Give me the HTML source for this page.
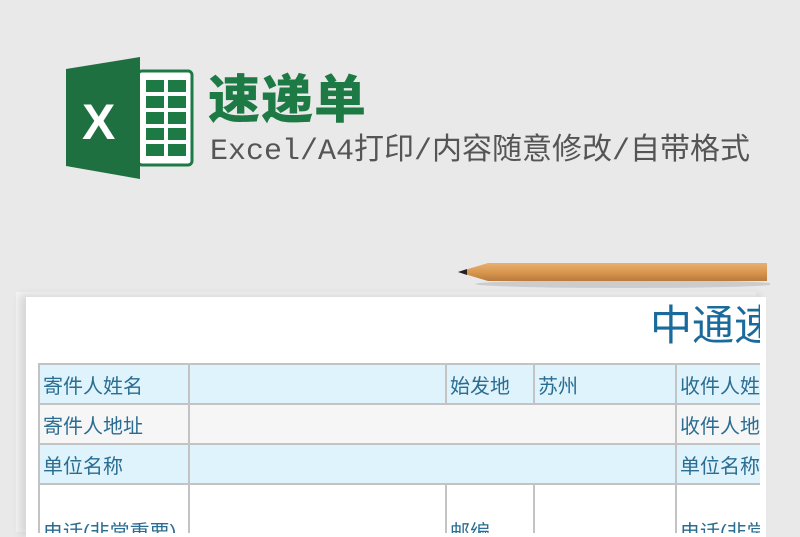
<!DOCTYPE html>
<html><head><meta charset="utf-8"><style>
body{margin:0;width:800px;height:526px;overflow:hidden;background:#e9e9e9;position:relative;font-family:"Liberation Sans","Noto Sans CJK SC",sans-serif}
.abs{position:absolute}
.t1{left:208px;top:70px;font-size:52px;font-weight:900;color:#1e7a45;line-height:62px;letter-spacing:1px}
.t2{left:210px;top:134px;font-size:30px;color:#555;line-height:36px;font-family:"Liberation Mono","Noto Sans CJK SC",monospace}
.paper{left:26px;top:297px;width:740px;height:240px;background:#fff;box-shadow:-6px -2px 8px rgba(0,0,0,.12)}
.paper2{left:16px;top:292px;width:740px;height:240px;background:#f3f3f3}
table{position:absolute;border-collapse:collapse;font-size:20px;color:#2a6d92}
td{border:2px solid #c3c3c3;padding:0 3px;height:38px;vertical-align:middle;white-space:nowrap;overflow:hidden}
.b{background:#def3fb}.g{background:#f6f6f6}
</style></head><body>
<svg class="abs" style="left:60px;top:55px" width="140" height="125" viewBox="0 0 140 125">
<rect x="78" y="16" width="54" height="94" rx="4" fill="#fff" stroke="#1e7a45" stroke-width="3"/>
<g fill="#1e7a45"><rect x="86" y="25" width="18" height="12"/><rect x="108" y="25" width="18" height="12"/>
<rect x="86" y="41" width="18" height="12"/><rect x="108" y="41" width="18" height="12"/>
<rect x="86" y="57" width="18" height="12"/><rect x="108" y="57" width="18" height="12"/>
<rect x="86" y="73" width="18" height="12"/><rect x="108" y="73" width="18" height="12"/>
<rect x="86" y="89" width="18" height="12"/><rect x="108" y="89" width="18" height="12"/></g>
<path d="M6 14 L80 2 L80 124 L6 111 Z" fill="#1e7040"/>
<text x="22" y="84" font-size="50" font-weight="bold" fill="#fff" font-family="Liberation Sans">X</text>
</svg>
<div class="abs t1">速递单</div>
<div class="abs t2">Excel/A4打印/内容随意修改/自带格式</div>
<div class="abs paper2"></div>
<div class="abs paper"></div>
<svg class="abs" style="left:455px;top:260px" width="315" height="30">
<defs><linearGradient id="p" x1="0" y1="0" x2="0" y2="1"><stop offset="0" stop-color="#e8b070"/><stop offset=".5" stop-color="#d9974f"/><stop offset="1" stop-color="#b97a3c"/></linearGradient></defs>
<ellipse cx="170" cy="24" rx="150" ry="4" fill="rgba(0,0,0,.12)"/>
<path d="M3 12 L33 3 L312 3 L312 21 L33 21 Z" fill="url(#p)"/>
<path d="M3 12 L12 9 L12 15 Z" fill="#222"/>
</svg>
<div class="abs" style="left:650px;top:298px;font-size:42px;color:#1a6a9c;line-height:56px;width:110px;overflow:hidden;white-space:nowrap">中通速递</div>
<div class="abs" style="left:38px;top:363px;width:722px;height:170px;overflow:hidden">
<table style="left:0;top:0;table-layout:fixed;width:760px">
<colgroup><col style="width:150px"><col style="width:257px"><col style="width:88px"><col style="width:142px"><col style="width:123px"></colgroup>
<tr><td class="b">寄件人姓名</td><td class="b"></td><td class="b">始发地</td><td class="b">苏州</td><td class="b">收件人姓名</td></tr>
<tr><td class="g">寄件人地址</td><td class="g" colspan="3"></td><td class="g">收件人地址</td></tr>
<tr><td class="b">单位名称</td><td class="b" colspan="3"></td><td class="b">单位名称</td></tr>
<tr><td style="height:60px;vertical-align:bottom">电话(非常重要)</td><td></td><td style="vertical-align:bottom">邮编</td><td></td><td style="vertical-align:bottom">电话(非常</td></tr>
</table></div>
</body></html>
